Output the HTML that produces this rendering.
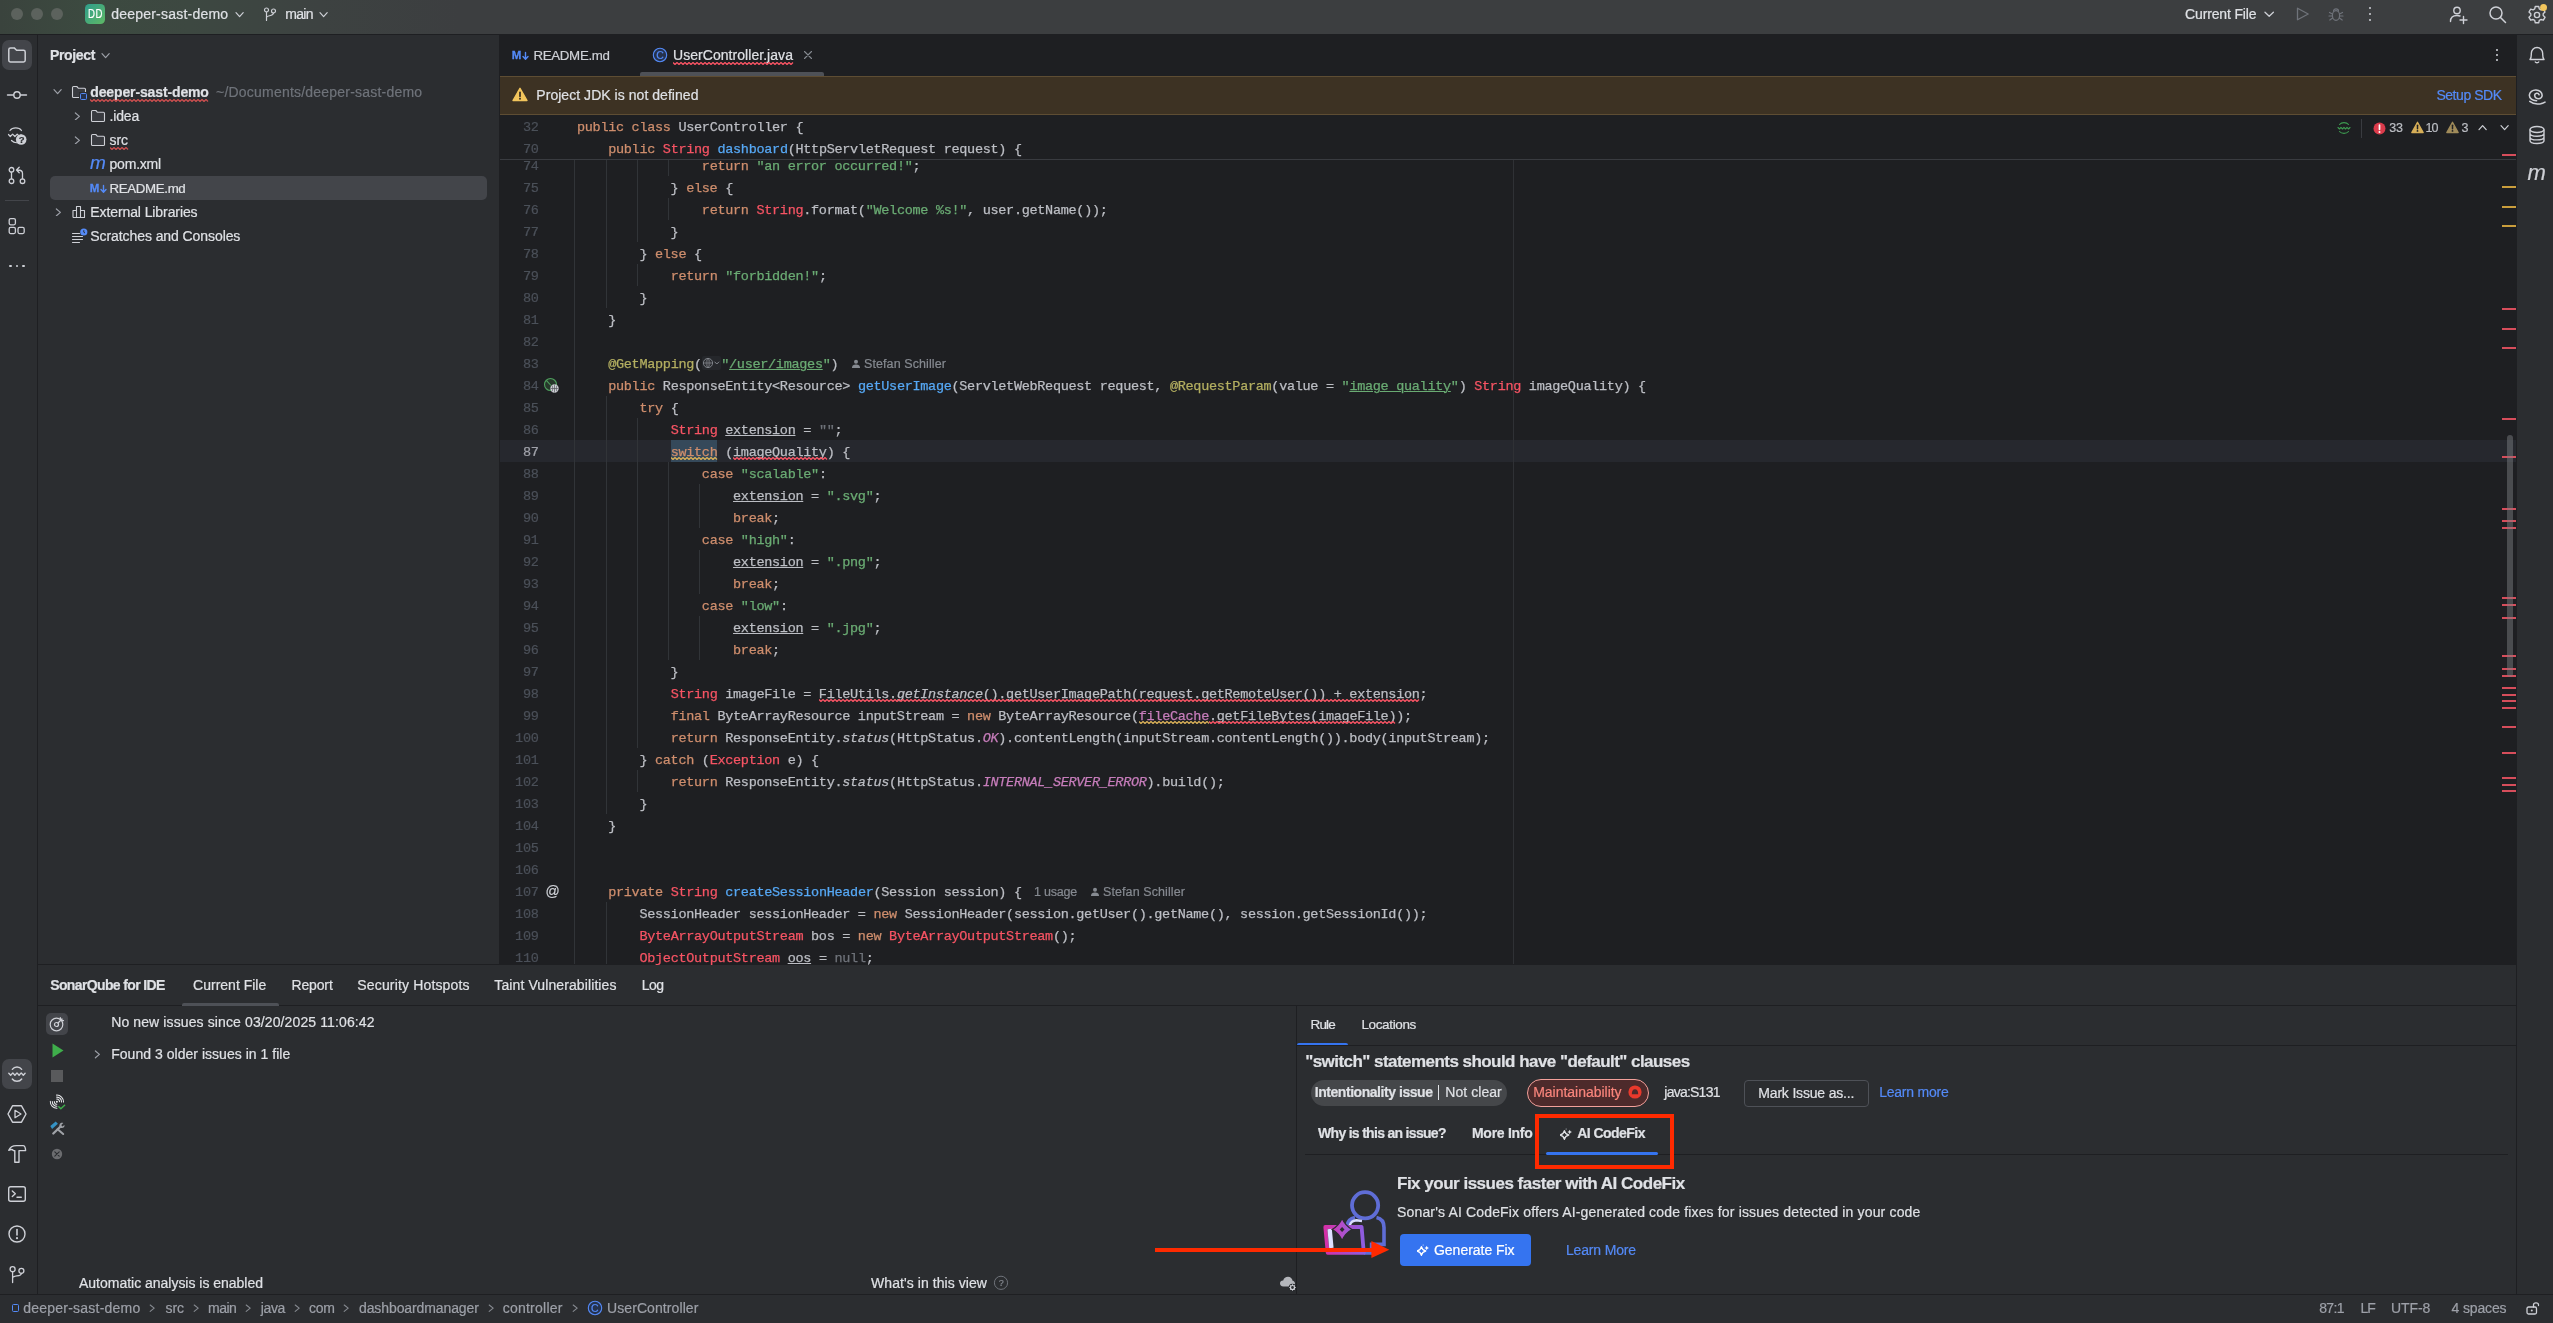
<!DOCTYPE html>
<html><head><meta charset="utf-8"><title>deeper-sast-demo – UserController.java</title>
<style>
html,body{margin:0;padding:0;background:#2b2d30;}
body{width:2553px;height:1323px;position:relative;overflow:hidden;font-family:"Liberation Sans",sans-serif;font-size:14px;color:#dfe1e5;-webkit-text-stroke:0.2px;}
.c{position:absolute;left:577px;height:22px;line-height:25px;font-family:"Liberation Mono",monospace;font-size:13.5px;letter-spacing:-0.3px;-webkit-text-stroke:0.25px;color:#bcbec4;white-space:pre;}
.ln{position:absolute;left:500px;width:38.5px;text-align:right;height:22px;line-height:25px;font-family:"Liberation Mono",monospace;font-size:13.5px;letter-spacing:-0.3px;color:#4b5059;}
.k{color:#cf8e6d}.s{color:#6aab73}.f{color:#56a8f5}.e{color:#f75464}.a{color:#b3ae60}.p{color:#c77dbb}.g{color:#6f737a}
.i{font-style:italic}
.u{text-decoration:underline;text-underline-offset:1px;text-decoration-thickness:1px}
.wr{text-decoration:underline wavy #f75464;text-underline-offset:3px;text-decoration-thickness:1px;text-decoration-skip-ink:none}
.wy{text-decoration:underline wavy #d6ae58;text-underline-offset:3px;text-decoration-thickness:1px;text-decoration-skip-ink:none}
.hint{font-family:"Liberation Sans",sans-serif;font-size:12.5px;color:#868a91}
#root{position:absolute;left:0;top:0;width:2553px;height:1323px;will-change:transform;}
</style></head><body><div id="root">
<div style="position:absolute;left:0px;top:0px;width:2553px;height:34px;background:linear-gradient(90deg,#3a433d 0px,#3c4a40 90px,#3d4841 190px,#3d4241 320px,#3c3e40 460px);"></div>
<div style="position:absolute;left:0px;top:34px;width:2553px;height:1px;background:#1e1f22;"></div>
<div style="position:absolute;left:500px;top:34px;width:2016px;height:930px;background:#1e1f22;"></div>
<div style="position:absolute;left:37px;top:34px;width:1px;height:1261px;background:#1e1f22;"></div>
<div style="position:absolute;left:499px;top:34px;width:1px;height:930px;background:#1e1f22;"></div>
<div style="position:absolute;left:2516px;top:34px;width:1px;height:1261px;background:#1e1f22;"></div>
<div style="position:absolute;left:38px;top:964px;width:2478px;height:1px;background:#1e1f22;"></div>
<div style="position:absolute;left:38px;top:1005px;width:2478px;height:1px;background:#1e1f22;"></div>
<div style="position:absolute;left:1296px;top:1006px;width:1px;height:289px;background:#1e1f22;"></div>
<div style="position:absolute;left:0px;top:1294px;width:2553px;height:1px;background:#1e1f22;"></div>
<div style="position:absolute;left:500px;top:76px;width:2016px;height:39px;background:#3d3223;box-sizing:border-box;border-top:1px solid #5e4d33;border-bottom:1px solid #5e4d33;"></div>
<div style="position:absolute;left:640px;top:72px;width:184px;height:4px;background:#4e5157;border-radius:2px 2px 0 0;"></div>
<div style="position:absolute;left:500px;top:159px;width:2016px;height:1px;background:#393b40;"></div>
<div style="position:absolute;left:500px;top:440px;width:2016px;height:22px;background:#26282e;"></div>
<div style="position:absolute;left:574px;top:160px;width:1px;height:804px;background:#313438;"></div>
<div style="position:absolute;left:1513px;top:160px;width:1px;height:804px;background:#2f3135;"></div>
<div class="ln" style="top:115px">32</div><div class="c" style="top:115px"><span class="k">public class</span> UserController {</div>
<div class="ln" style="top:137px">70</div><div class="c" style="top:137px">    <span class="k">public</span> <span class="e">String</span> <span class="f">dashboard</span>(HttpServletRequest request) {</div>
<div style="position:absolute;left:606px;top:160px;width:1px;height:148px;background:#313438;"></div>
<div style="position:absolute;left:637px;top:160px;width:1px;height:82px;background:#313438;"></div>
<div style="position:absolute;left:637px;top:264px;width:1px;height:22px;background:#313438;"></div>
<div style="position:absolute;left:668px;top:160px;width:1px;height:16px;background:#313438;"></div>
<div style="position:absolute;left:668px;top:198px;width:1px;height:22px;background:#313438;"></div>
<div style="position:absolute;left:606px;top:396px;width:1px;height:418px;background:#313438;"></div>
<div style="position:absolute;left:637px;top:418px;width:1px;height:330px;background:#313438;"></div>
<div style="position:absolute;left:637px;top:770px;width:1px;height:22px;background:#313438;"></div>
<div style="position:absolute;left:668px;top:462px;width:1px;height:198px;background:#313438;"></div>
<div style="position:absolute;left:699px;top:484px;width:1px;height:44px;background:#313438;"></div>
<div style="position:absolute;left:699px;top:550px;width:1px;height:44px;background:#313438;"></div>
<div style="position:absolute;left:699px;top:616px;width:1px;height:44px;background:#313438;"></div>
<div style="position:absolute;left:606px;top:902px;width:1px;height:62px;background:#313438;"></div>
<div style="position:absolute;left:500px;top:160px;width:2016px;height:805px;overflow:hidden">
<div class="ln" style="left:0;top:-6px;color:#4b5059">74</div><div class="c" style="left:77px;top:-6px">                <span class="k">return</span> <span class="s">&quot;an error occurred!&quot;</span>;</div>
<div class="ln" style="left:0;top:16px;color:#4b5059">75</div><div class="c" style="left:77px;top:16px">            } <span class="k">else</span> {</div>
<div class="ln" style="left:0;top:38px;color:#4b5059">76</div><div class="c" style="left:77px;top:38px">                <span class="k">return</span> <span class="e">String</span>.format(<span class="s">&quot;Welcome %s!&quot;</span>, user.getName());</div>
<div class="ln" style="left:0;top:60px;color:#4b5059">77</div><div class="c" style="left:77px;top:60px">            }</div>
<div class="ln" style="left:0;top:82px;color:#4b5059">78</div><div class="c" style="left:77px;top:82px">        } <span class="k">else</span> {</div>
<div class="ln" style="left:0;top:104px;color:#4b5059">79</div><div class="c" style="left:77px;top:104px">            <span class="k">return</span> <span class="s">&quot;forbidden!&quot;</span>;</div>
<div class="ln" style="left:0;top:126px;color:#4b5059">80</div><div class="c" style="left:77px;top:126px">        }</div>
<div class="ln" style="left:0;top:148px;color:#4b5059">81</div><div class="c" style="left:77px;top:148px">    }</div>
<div class="ln" style="left:0;top:170px;color:#4b5059">82</div><div class="c" style="left:77px;top:170px"></div>
<div class="ln" style="left:0;top:192px;color:#4b5059">83</div><div class="c" style="left:77px;top:192px">    <span class="a">@GetMapping</span>(<span style="display:inline-block;width:19.4px"></span><span class="s">&quot;<span class="u">/user/images</span>&quot;</span>)</div>
<div class="ln" style="left:0;top:214px;color:#4b5059">84</div><div class="c" style="left:77px;top:214px">    <span class="k">public</span> ResponseEntity&lt;Resource&gt; <span class="f">getUserImage</span>(ServletWebRequest request, <span class="a">@RequestParam</span>(value = <span class="s">&quot;<span class="u">image_quality</span>&quot;</span>) <span class="e">String</span> imageQuality) {</div>
<div class="ln" style="left:0;top:236px;color:#4b5059">85</div><div class="c" style="left:77px;top:236px">        <span class="k">try</span> {</div>
<div class="ln" style="left:0;top:258px;color:#4b5059">86</div><div class="c" style="left:77px;top:258px">            <span class="e">String</span> <span class="u">extension</span> = <span class="g">&quot;&quot;</span>;</div>
<div class="ln" style="left:0;top:280px;color:#a1a3ab">87</div><div class="c" style="left:77px;top:280px">            <span style="background:#35495a;display:inline-block;height:22px"><span class="k">switch</span></span> (imageQuality) {</div>
<div class="ln" style="left:0;top:302px;color:#4b5059">88</div><div class="c" style="left:77px;top:302px">                <span class="k">case</span> <span class="s">&quot;scalable&quot;</span>:</div>
<div class="ln" style="left:0;top:324px;color:#4b5059">89</div><div class="c" style="left:77px;top:324px">                    <span class="u">extension</span> = <span class="s">&quot;.svg&quot;</span>;</div>
<div class="ln" style="left:0;top:346px;color:#4b5059">90</div><div class="c" style="left:77px;top:346px">                    <span class="k">break</span>;</div>
<div class="ln" style="left:0;top:368px;color:#4b5059">91</div><div class="c" style="left:77px;top:368px">                <span class="k">case</span> <span class="s">&quot;high&quot;</span>:</div>
<div class="ln" style="left:0;top:390px;color:#4b5059">92</div><div class="c" style="left:77px;top:390px">                    <span class="u">extension</span> = <span class="s">&quot;.png&quot;</span>;</div>
<div class="ln" style="left:0;top:412px;color:#4b5059">93</div><div class="c" style="left:77px;top:412px">                    <span class="k">break</span>;</div>
<div class="ln" style="left:0;top:434px;color:#4b5059">94</div><div class="c" style="left:77px;top:434px">                <span class="k">case</span> <span class="s">&quot;low&quot;</span>:</div>
<div class="ln" style="left:0;top:456px;color:#4b5059">95</div><div class="c" style="left:77px;top:456px">                    <span class="u">extension</span> = <span class="s">&quot;.jpg&quot;</span>;</div>
<div class="ln" style="left:0;top:478px;color:#4b5059">96</div><div class="c" style="left:77px;top:478px">                    <span class="k">break</span>;</div>
<div class="ln" style="left:0;top:500px;color:#4b5059">97</div><div class="c" style="left:77px;top:500px">            }</div>
<div class="ln" style="left:0;top:522px;color:#4b5059">98</div><div class="c" style="left:77px;top:522px">            <span class="e">String</span> imageFile = FileUtils.<span class="i">getInstance</span>().getUserImagePath(request.getRemoteUser()) + extension;</div>
<div class="ln" style="left:0;top:544px;color:#4b5059">99</div><div class="c" style="left:77px;top:544px">            <span class="k">final</span> ByteArrayResource inputStream = <span class="k">new</span> ByteArrayResource(<span class="p">fileCache</span>.getFileBytes(imageFile));</div>
<div class="ln" style="left:0;top:566px;color:#4b5059">100</div><div class="c" style="left:77px;top:566px">            <span class="k">return</span> ResponseEntity.<span class="i">status</span>(HttpStatus.<span class="p"><span class="i">OK</span></span>).contentLength(inputStream.contentLength()).body(inputStream);</div>
<div class="ln" style="left:0;top:588px;color:#4b5059">101</div><div class="c" style="left:77px;top:588px">        } <span class="k">catch</span> (<span class="e">Exception</span> e) {</div>
<div class="ln" style="left:0;top:610px;color:#4b5059">102</div><div class="c" style="left:77px;top:610px">            <span class="k">return</span> ResponseEntity.<span class="i">status</span>(HttpStatus.<span class="p"><span class="i">INTERNAL_SERVER_ERROR</span></span>).build();</div>
<div class="ln" style="left:0;top:632px;color:#4b5059">103</div><div class="c" style="left:77px;top:632px">        }</div>
<div class="ln" style="left:0;top:654px;color:#4b5059">104</div><div class="c" style="left:77px;top:654px">    }</div>
<div class="ln" style="left:0;top:676px;color:#4b5059">105</div><div class="c" style="left:77px;top:676px"></div>
<div class="ln" style="left:0;top:698px;color:#4b5059">106</div><div class="c" style="left:77px;top:698px"></div>
<div class="ln" style="left:0;top:720px;color:#4b5059">107</div><div class="c" style="left:77px;top:720px">    <span class="k">private</span> <span class="e">String</span> <span class="f">createSessionHeader</span>(Session session) {</div>
<div class="ln" style="left:0;top:742px;color:#4b5059">108</div><div class="c" style="left:77px;top:742px">        SessionHeader sessionHeader = <span class="k">new</span> SessionHeader(session.getUser().getName(), session.getSessionId());</div>
<div class="ln" style="left:0;top:764px;color:#4b5059">109</div><div class="c" style="left:77px;top:764px">        <span class="e">ByteArrayOutputStream</span> bos = <span class="k">new</span> <span class="e">ByteArrayOutputStream</span>();</div>
<div class="ln" style="left:0;top:786px;color:#4b5059">110</div><div class="c" style="left:77px;top:786px">        <span class="e">ObjectOutputStream</span> <span class="u">oos</span> = <span class="g">null</span>;</div>
</div>
<span style="position:absolute;left:864.0px;top:354.0px;line-height:20px;font-size:12.5px;color:#868a91;white-space:pre;letter-spacing:0.093px;">Stefan Schiller</span>
<span style="position:absolute;left:1034.0px;top:882.0px;line-height:20px;font-size:12.5px;color:#868a91;white-space:pre;letter-spacing:-0.212px;">1 usage</span>
<span style="position:absolute;left:1103.0px;top:882.0px;line-height:20px;font-size:12.5px;color:#868a91;white-space:pre;letter-spacing:0.093px;">Stefan Schiller</span>
<svg style="position:absolute;left:671px;top:457.0px;" width="47" height="3" viewBox="0 0 47 3" fill="none"><path d="M0 0.5 L2 2.5 L4 0.5 L6 2.5 L8 0.5 L10 2.5 L12 0.5 L14 2.5 L16 0.5 L18 2.5 L20 0.5 L22 2.5 L24 0.5 L26 2.5 L28 0.5 L30 2.5 L32 0.5 L34 2.5 L36 0.5 L38 2.5 L40 0.5 L42 2.5 L44 0.5 L46 2.5" stroke="#d6ae58" stroke-width="1.25" stroke-linejoin="round"/></svg>
<svg style="position:absolute;left:733px;top:457.0px;" width="95" height="3" viewBox="0 0 95 3" fill="none"><path d="M0 0.5 L2 2.5 L4 0.5 L6 2.5 L8 0.5 L10 2.5 L12 0.5 L14 2.5 L16 0.5 L18 2.5 L20 0.5 L22 2.5 L24 0.5 L26 2.5 L28 0.5 L30 2.5 L32 0.5 L34 2.5 L36 0.5 L38 2.5 L40 0.5 L42 2.5 L44 0.5 L46 2.5 L48 0.5 L50 2.5 L52 0.5 L54 2.5 L56 0.5 L58 2.5 L60 0.5 L62 2.5 L64 0.5 L66 2.5 L68 0.5 L70 2.5 L72 0.5 L74 2.5 L76 0.5 L78 2.5 L80 0.5 L82 2.5 L84 0.5 L86 2.5 L88 0.5 L90 2.5 L92 0.5 L94 2.5" stroke="#f75464" stroke-width="1.25" stroke-linejoin="round"/></svg>
<svg style="position:absolute;left:819px;top:699.0px;" width="601" height="3" viewBox="0 0 601 3" fill="none"><path d="M0 0.5 L2 2.5 L4 0.5 L6 2.5 L8 0.5 L10 2.5 L12 0.5 L14 2.5 L16 0.5 L18 2.5 L20 0.5 L22 2.5 L24 0.5 L26 2.5 L28 0.5 L30 2.5 L32 0.5 L34 2.5 L36 0.5 L38 2.5 L40 0.5 L42 2.5 L44 0.5 L46 2.5 L48 0.5 L50 2.5 L52 0.5 L54 2.5 L56 0.5 L58 2.5 L60 0.5 L62 2.5 L64 0.5 L66 2.5 L68 0.5 L70 2.5 L72 0.5 L74 2.5 L76 0.5 L78 2.5 L80 0.5 L82 2.5 L84 0.5 L86 2.5 L88 0.5 L90 2.5 L92 0.5 L94 2.5 L96 0.5 L98 2.5 L100 0.5 L102 2.5 L104 0.5 L106 2.5 L108 0.5 L110 2.5 L112 0.5 L114 2.5 L116 0.5 L118 2.5 L120 0.5 L122 2.5 L124 0.5 L126 2.5 L128 0.5 L130 2.5 L132 0.5 L134 2.5 L136 0.5 L138 2.5 L140 0.5 L142 2.5 L144 0.5 L146 2.5 L148 0.5 L150 2.5 L152 0.5 L154 2.5 L156 0.5 L158 2.5 L160 0.5 L162 2.5 L164 0.5 L166 2.5 L168 0.5 L170 2.5 L172 0.5 L174 2.5 L176 0.5 L178 2.5 L180 0.5 L182 2.5 L184 0.5 L186 2.5 L188 0.5 L190 2.5 L192 0.5 L194 2.5 L196 0.5 L198 2.5 L200 0.5 L202 2.5 L204 0.5 L206 2.5 L208 0.5 L210 2.5 L212 0.5 L214 2.5 L216 0.5 L218 2.5 L220 0.5 L222 2.5 L224 0.5 L226 2.5 L228 0.5 L230 2.5 L232 0.5 L234 2.5 L236 0.5 L238 2.5 L240 0.5 L242 2.5 L244 0.5 L246 2.5 L248 0.5 L250 2.5 L252 0.5 L254 2.5 L256 0.5 L258 2.5 L260 0.5 L262 2.5 L264 0.5 L266 2.5 L268 0.5 L270 2.5 L272 0.5 L274 2.5 L276 0.5 L278 2.5 L280 0.5 L282 2.5 L284 0.5 L286 2.5 L288 0.5 L290 2.5 L292 0.5 L294 2.5 L296 0.5 L298 2.5 L300 0.5 L302 2.5 L304 0.5 L306 2.5 L308 0.5 L310 2.5 L312 0.5 L314 2.5 L316 0.5 L318 2.5 L320 0.5 L322 2.5 L324 0.5 L326 2.5 L328 0.5 L330 2.5 L332 0.5 L334 2.5 L336 0.5 L338 2.5 L340 0.5 L342 2.5 L344 0.5 L346 2.5 L348 0.5 L350 2.5 L352 0.5 L354 2.5 L356 0.5 L358 2.5 L360 0.5 L362 2.5 L364 0.5 L366 2.5 L368 0.5 L370 2.5 L372 0.5 L374 2.5 L376 0.5 L378 2.5 L380 0.5 L382 2.5 L384 0.5 L386 2.5 L388 0.5 L390 2.5 L392 0.5 L394 2.5 L396 0.5 L398 2.5 L400 0.5 L402 2.5 L404 0.5 L406 2.5 L408 0.5 L410 2.5 L412 0.5 L414 2.5 L416 0.5 L418 2.5 L420 0.5 L422 2.5 L424 0.5 L426 2.5 L428 0.5 L430 2.5 L432 0.5 L434 2.5 L436 0.5 L438 2.5 L440 0.5 L442 2.5 L444 0.5 L446 2.5 L448 0.5 L450 2.5 L452 0.5 L454 2.5 L456 0.5 L458 2.5 L460 0.5 L462 2.5 L464 0.5 L466 2.5 L468 0.5 L470 2.5 L472 0.5 L474 2.5 L476 0.5 L478 2.5 L480 0.5 L482 2.5 L484 0.5 L486 2.5 L488 0.5 L490 2.5 L492 0.5 L494 2.5 L496 0.5 L498 2.5 L500 0.5 L502 2.5 L504 0.5 L506 2.5 L508 0.5 L510 2.5 L512 0.5 L514 2.5 L516 0.5 L518 2.5 L520 0.5 L522 2.5 L524 0.5 L526 2.5 L528 0.5 L530 2.5 L532 0.5 L534 2.5 L536 0.5 L538 2.5 L540 0.5 L542 2.5 L544 0.5 L546 2.5 L548 0.5 L550 2.5 L552 0.5 L554 2.5 L556 0.5 L558 2.5 L560 0.5 L562 2.5 L564 0.5 L566 2.5 L568 0.5 L570 2.5 L572 0.5 L574 2.5 L576 0.5 L578 2.5 L580 0.5 L582 2.5 L584 0.5 L586 2.5 L588 0.5 L590 2.5 L592 0.5 L594 2.5 L596 0.5 L598 2.5 L600 0.5" stroke="#f75464" stroke-width="1.25" stroke-linejoin="round"/></svg>
<svg style="position:absolute;left:1139px;top:721.0px;" width="71" height="3" viewBox="0 0 71 3" fill="none"><path d="M0 0.5 L2 2.5 L4 0.5 L6 2.5 L8 0.5 L10 2.5 L12 0.5 L14 2.5 L16 0.5 L18 2.5 L20 0.5 L22 2.5 L24 0.5 L26 2.5 L28 0.5 L30 2.5 L32 0.5 L34 2.5 L36 0.5 L38 2.5 L40 0.5 L42 2.5 L44 0.5 L46 2.5 L48 0.5 L50 2.5 L52 0.5 L54 2.5 L56 0.5 L58 2.5 L60 0.5 L62 2.5 L64 0.5 L66 2.5 L68 0.5 L70 2.5" stroke="#d6ae58" stroke-width="1.25" stroke-linejoin="round"/></svg>
<svg style="position:absolute;left:1209px;top:721.0px;" width="188" height="3" viewBox="0 0 188 3" fill="none"><path d="M0 0.5 L2 2.5 L4 0.5 L6 2.5 L8 0.5 L10 2.5 L12 0.5 L14 2.5 L16 0.5 L18 2.5 L20 0.5 L22 2.5 L24 0.5 L26 2.5 L28 0.5 L30 2.5 L32 0.5 L34 2.5 L36 0.5 L38 2.5 L40 0.5 L42 2.5 L44 0.5 L46 2.5 L48 0.5 L50 2.5 L52 0.5 L54 2.5 L56 0.5 L58 2.5 L60 0.5 L62 2.5 L64 0.5 L66 2.5 L68 0.5 L70 2.5 L72 0.5 L74 2.5 L76 0.5 L78 2.5 L80 0.5 L82 2.5 L84 0.5 L86 2.5 L88 0.5 L90 2.5 L92 0.5 L94 2.5 L96 0.5 L98 2.5 L100 0.5 L102 2.5 L104 0.5 L106 2.5 L108 0.5 L110 2.5 L112 0.5 L114 2.5 L116 0.5 L118 2.5 L120 0.5 L122 2.5 L124 0.5 L126 2.5 L128 0.5 L130 2.5 L132 0.5 L134 2.5 L136 0.5 L138 2.5 L140 0.5 L142 2.5 L144 0.5 L146 2.5 L148 0.5 L150 2.5 L152 0.5 L154 2.5 L156 0.5 L158 2.5 L160 0.5 L162 2.5 L164 0.5 L166 2.5 L168 0.5 L170 2.5 L172 0.5 L174 2.5 L176 0.5 L178 2.5 L180 0.5 L182 2.5 L184 0.5 L186 2.5" stroke="#f75464" stroke-width="1.25" stroke-linejoin="round"/></svg>
<span style="position:absolute;left:111.2px;top:4.2px;line-height:20px;font-size:14px;color:#dfe1e5;white-space:pre;letter-spacing:0.217px;">deeper-sast-demo</span>
<span style="position:absolute;left:285.2px;top:4.2px;line-height:20px;font-size:14px;color:#dfe1e5;white-space:pre;letter-spacing:-0.640px;">main</span>
<span style="position:absolute;left:2185.1px;top:4.2px;line-height:20px;font-size:14px;color:#dfe1e5;white-space:pre;letter-spacing:-0.153px;">Current File</span>
<div style="position:absolute;left:85px;top:4px;width:20px;height:20px;background:linear-gradient(135deg,#2f9e8c,#5fb865);border-radius:4.5px;"></div>
<span style="position:absolute;left:87.9px;top:4.4px;line-height:20px;font-size:13px;color:#fff;white-space:pre;display:inline-block;transform:scaleX(0.74);transform-origin:0 50%;letter-spacing:0.6px;">DD</span>
<div style="position:absolute;left:11px;top:8px;width:12px;height:12px;background:#5c625d;border-radius:50%;"></div>
<div style="position:absolute;left:31px;top:8px;width:12px;height:12px;background:#5c625d;border-radius:50%;"></div>
<div style="position:absolute;left:51px;top:8px;width:12px;height:12px;background:#5c625d;border-radius:50%;"></div>
<span style="position:absolute;left:50.0px;top:45.0px;line-height:20px;font-size:14px;color:#dfe1e5;white-space:pre;font-weight:700;letter-spacing:-0.353px;">Project</span>
<span style="position:absolute;left:90.3px;top:82.3px;line-height:20px;font-size:14px;color:#dfe1e5;white-space:pre;font-weight:700;letter-spacing:-0.131px;">deeper-sast-demo</span>
<span style="position:absolute;left:216.0px;top:82.3px;line-height:20px;font-size:14px;color:#6f737a;white-space:pre;letter-spacing:0.212px;">~/Documents/deeper-sast-demo</span>
<span style="position:absolute;left:109.5px;top:106.0px;line-height:20px;font-size:14px;color:#dfe1e5;white-space:pre;letter-spacing:-0.172px;">.idea</span>
<span style="position:absolute;left:109.5px;top:130.0px;line-height:20px;font-size:14px;color:#dfe1e5;white-space:pre;letter-spacing:-0.057px;">src</span>
<span style="position:absolute;left:109.5px;top:154.0px;line-height:20px;font-size:14px;color:#dfe1e5;white-space:pre;letter-spacing:-0.201px;">pom.xml</span>
<div style="position:absolute;left:50px;top:176px;width:437px;height:24px;background:#43454a;border-radius:5px;"></div>
<span style="position:absolute;left:109.5px;top:178.7px;line-height:20px;font-size:13.3px;color:#dfe1e5;white-space:pre;letter-spacing:-0.351px;">README.md</span>
<span style="position:absolute;left:90.3px;top:202.0px;line-height:20px;font-size:14px;color:#dfe1e5;white-space:pre;letter-spacing:-0.097px;">External Libraries</span>
<span style="position:absolute;left:90.3px;top:226.0px;line-height:20px;font-size:14px;color:#dfe1e5;white-space:pre;letter-spacing:-0.080px;">Scratches and Consoles</span>
<span style="position:absolute;left:533.4px;top:45.9px;line-height:20px;font-size:13.3px;color:#ced0d6;white-space:pre;letter-spacing:-0.307px;">README.md</span>
<span style="position:absolute;left:673.0px;top:45.0px;line-height:20px;font-size:14px;color:#dfe1e5;white-space:pre;letter-spacing:0.049px;">UserController.java</span>
<span style="position:absolute;left:536.3px;top:85.0px;line-height:20px;font-size:14px;color:#dfe1e5;white-space:pre;letter-spacing:0.043px;">Project JDK is not defined</span>
<span style="position:absolute;left:2436.4px;top:85.2px;line-height:20px;font-size:14px;color:#548af7;white-space:pre;letter-spacing:-0.452px;">Setup SDK</span>
<span style="position:absolute;left:2389.3px;top:118.0px;line-height:20px;font-size:12.5px;color:#bcbec4;white-space:pre;letter-spacing:-0.303px;">33</span>
<span style="position:absolute;left:2425.6px;top:118.0px;line-height:20px;font-size:12.5px;color:#bcbec4;white-space:pre;letter-spacing:-0.953px;">10</span>
<span style="position:absolute;left:2461.4px;top:118.0px;line-height:20px;font-size:12.5px;color:#bcbec4;white-space:pre;">3</span>
<span style="position:absolute;left:50.2px;top:975.3px;line-height:20px;font-size:14px;color:#dfe1e5;white-space:pre;font-weight:700;letter-spacing:-0.631px;">SonarQube for IDE</span>
<span style="position:absolute;left:193.1px;top:975.3px;line-height:20px;font-size:14px;color:#dfe1e5;white-space:pre;">Current File</span>
<span style="position:absolute;left:291.4px;top:975.3px;line-height:20px;font-size:14px;color:#dfe1e5;white-space:pre;letter-spacing:-0.122px;">Report</span>
<span style="position:absolute;left:357.3px;top:975.3px;line-height:20px;font-size:14px;color:#dfe1e5;white-space:pre;letter-spacing:0.158px;">Security Hotspots</span>
<span style="position:absolute;left:494.3px;top:975.3px;line-height:20px;font-size:14px;color:#dfe1e5;white-space:pre;letter-spacing:0.104px;">Taint Vulnerabilities</span>
<span style="position:absolute;left:641.7px;top:975.3px;line-height:20px;font-size:14px;color:#dfe1e5;white-space:pre;letter-spacing:-0.486px;">Log</span>
<div style="position:absolute;left:181.5px;top:1003px;width:97.5px;height:3px;background:#4e5157;border-radius:2px 2px 0 0;"></div>
<span style="position:absolute;left:111.2px;top:1012.4px;line-height:20px;font-size:14px;color:#dfe1e5;white-space:pre;letter-spacing:0.115px;">No new issues since 03/20/2025 11:06:42</span>
<span style="position:absolute;left:111.2px;top:1044.2px;line-height:20px;font-size:14px;color:#dfe1e5;white-space:pre;letter-spacing:0.029px;">Found 3 older issues in 1 file</span>
<span style="position:absolute;left:79.0px;top:1273.0px;line-height:20px;font-size:14px;color:#dfe1e5;white-space:pre;letter-spacing:-0.015px;">Automatic analysis is enabled</span>
<span style="position:absolute;left:871.0px;top:1272.5px;line-height:20px;font-size:14px;color:#dfe1e5;white-space:pre;letter-spacing:0.067px;">What&#x27;s in this view</span>
<span style="position:absolute;left:1310.5px;top:1014.8px;line-height:20px;font-size:13.5px;color:#dfe1e5;white-space:pre;letter-spacing:-0.866px;">Rule</span>
<span style="position:absolute;left:1361.4px;top:1014.8px;line-height:20px;font-size:13.5px;color:#dfe1e5;white-space:pre;letter-spacing:-0.355px;">Locations</span>
<div style="position:absolute;left:1297px;top:1043px;width:51px;height:3px;background:#3574f0;border-radius:2px 2px 0 0;"></div>
<div style="position:absolute;left:1297px;top:1045px;width:1219px;height:1px;background:#1e1f22;"></div>
<span style="position:absolute;left:1305.2px;top:1050.2px;line-height:24px;font-size:17px;color:#dfe1e5;white-space:pre;font-weight:700;letter-spacing:-0.545px;">&quot;switch&quot; statements should have &quot;default&quot; clauses</span>
<div style="position:absolute;left:1310.5px;top:1079.5px;width:196px;height:26px;background:#45474a;border-radius:13px;"></div>
<span style="position:absolute;left:1314.8px;top:1082.4px;line-height:20px;font-size:14px;color:#dfe1e5;white-space:pre;font-weight:700;letter-spacing:-0.456px;">Intentionality issue</span>
<div style="position:absolute;left:1438.2px;top:1085px;width:1.2px;height:15px;background:#dfe1e5;"></div>
<span style="position:absolute;left:1445.3px;top:1082.4px;line-height:20px;font-size:14px;color:#dfe1e5;white-space:pre;letter-spacing:0.052px;">Not clear</span>
<div style="position:absolute;left:1527px;top:1078.5px;width:122px;height:28px;background:#4d2a2b;border-radius:14px;box-sizing:border-box;border:1.2px solid #f3a19b;"></div>
<span style="position:absolute;left:1533.2px;top:1082.4px;line-height:20px;font-size:14px;color:#f9857c;white-space:pre;letter-spacing:-0.021px;">Maintainability</span>
<span style="position:absolute;left:1664.3px;top:1082.4px;line-height:20px;font-size:14px;color:#dfe1e5;white-space:pre;letter-spacing:-0.765px;">java:S131</span>
<div style="position:absolute;left:1744px;top:1079.5px;width:125px;height:27.5px;background:transparent;border-radius:4px;box-sizing:border-box;border:1px solid #4e5157;"></div>
<span style="position:absolute;left:1758.3px;top:1083.0px;line-height:20px;font-size:14px;color:#dfe1e5;white-space:pre;letter-spacing:-0.182px;">Mark Issue as...</span>
<span style="position:absolute;left:1879.2px;top:1082.4px;line-height:20px;font-size:14px;color:#548af7;white-space:pre;letter-spacing:-0.229px;">Learn more</span>
<span style="position:absolute;left:1318.0px;top:1123.2px;line-height:20px;font-size:14px;color:#dfe1e5;white-space:pre;font-weight:700;letter-spacing:-0.694px;">Why is this an issue?</span>
<span style="position:absolute;left:1472.0px;top:1123.2px;line-height:20px;font-size:14px;color:#dfe1e5;white-space:pre;font-weight:700;letter-spacing:-0.289px;">More Info</span>
<span style="position:absolute;left:1577.2px;top:1123.2px;line-height:20px;font-size:14px;color:#dfe1e5;white-space:pre;font-weight:700;letter-spacing:-0.533px;">AI CodeFix</span>
<div style="position:absolute;left:1305px;top:1154px;width:1203px;height:1px;background:#1e1f22;"></div>
<div style="position:absolute;left:1546px;top:1152px;width:112px;height:3px;background:#3574f0;border-radius:1.5px;"></div>
<span style="position:absolute;left:1397.0px;top:1171.6px;line-height:24px;font-size:17px;color:#dfe1e5;white-space:pre;font-weight:700;letter-spacing:-0.492px;">Fix your issues faster with AI CodeFix</span>
<span style="position:absolute;left:1397.0px;top:1201.5px;line-height:20px;font-size:14px;color:#dfe1e5;white-space:pre;letter-spacing:0.157px;">Sonar&#x27;s AI CodeFix offers AI-generated code fixes for issues detected in your code</span>
<div style="position:absolute;left:1400px;top:1234px;width:131px;height:32px;background:#3574f0;border-radius:4px;"></div>
<span style="position:absolute;left:1434.0px;top:1240.0px;line-height:20px;font-size:14px;color:#fff;white-space:pre;letter-spacing:-0.028px;">Generate Fix</span>
<span style="position:absolute;left:1566.0px;top:1239.5px;line-height:20px;font-size:14px;color:#548af7;white-space:pre;letter-spacing:-0.169px;">Learn More</span>
<span style="position:absolute;left:23.3px;top:1298.0px;line-height:20px;font-size:14px;color:#9da0a8;white-space:pre;letter-spacing:0.223px;">deeper-sast-demo</span>
<span style="position:absolute;left:165.5px;top:1298.0px;line-height:20px;font-size:14px;color:#9da0a8;white-space:pre;letter-spacing:-0.124px;">src</span>
<span style="position:absolute;left:208.0px;top:1298.0px;line-height:20px;font-size:14px;color:#9da0a8;white-space:pre;letter-spacing:-0.490px;">main</span>
<span style="position:absolute;left:260.7px;top:1298.0px;line-height:20px;font-size:14px;color:#9da0a8;white-space:pre;letter-spacing:-0.347px;">java</span>
<span style="position:absolute;left:309.0px;top:1298.0px;line-height:20px;font-size:14px;color:#9da0a8;white-space:pre;letter-spacing:-0.284px;">com</span>
<span style="position:absolute;left:359.0px;top:1298.0px;line-height:20px;font-size:14px;color:#9da0a8;white-space:pre;letter-spacing:-0.101px;">dashboardmanager</span>
<span style="position:absolute;left:502.7px;top:1298.0px;line-height:20px;font-size:14px;color:#9da0a8;white-space:pre;letter-spacing:0.241px;">controller</span>
<span style="position:absolute;left:607.0px;top:1298.0px;line-height:20px;font-size:14px;color:#9da0a8;white-space:pre;letter-spacing:0.089px;">UserController</span>
<span style="position:absolute;left:2319.2px;top:1297.9px;line-height:20px;font-size:14px;color:#9da0a8;white-space:pre;letter-spacing:-0.637px;">87:1</span>
<span style="position:absolute;left:2360.4px;top:1297.9px;line-height:20px;font-size:14px;color:#9da0a8;white-space:pre;letter-spacing:-1.022px;">LF</span>
<span style="position:absolute;left:2391.1px;top:1297.9px;line-height:20px;font-size:14px;color:#9da0a8;white-space:pre;letter-spacing:-0.134px;">UTF-8</span>
<span style="position:absolute;left:2451.5px;top:1297.9px;line-height:20px;font-size:14px;color:#9da0a8;white-space:pre;letter-spacing:-0.143px;">4 spaces</span>
<svg style="position:absolute;left:90px;top:99.0px;" width="120" height="3" viewBox="0 0 120 3" fill="none"><path d="M0 0.5 L2 2.5 L4 0.5 L6 2.5 L8 0.5 L10 2.5 L12 0.5 L14 2.5 L16 0.5 L18 2.5 L20 0.5 L22 2.5 L24 0.5 L26 2.5 L28 0.5 L30 2.5 L32 0.5 L34 2.5 L36 0.5 L38 2.5 L40 0.5 L42 2.5 L44 0.5 L46 2.5 L48 0.5 L50 2.5 L52 0.5 L54 2.5 L56 0.5 L58 2.5 L60 0.5 L62 2.5 L64 0.5 L66 2.5 L68 0.5 L70 2.5 L72 0.5 L74 2.5 L76 0.5 L78 2.5 L80 0.5 L82 2.5 L84 0.5 L86 2.5 L88 0.5 L90 2.5 L92 0.5 L94 2.5 L96 0.5 L98 2.5 L100 0.5 L102 2.5 L104 0.5 L106 2.5 L108 0.5 L110 2.5 L112 0.5 L114 2.5 L116 0.5 L118 2.5" stroke="#c94f4f" stroke-width="1.25" stroke-linejoin="round"/></svg>
<svg style="position:absolute;left:110px;top:147.0px;" width="19" height="3" viewBox="0 0 19 3" fill="none"><path d="M0 0.5 L2 2.5 L4 0.5 L6 2.5 L8 0.5 L10 2.5 L12 0.5 L14 2.5 L16 0.5 L18 2.5" stroke="#c94f4f" stroke-width="1.25" stroke-linejoin="round"/></svg>
<svg style="position:absolute;left:673px;top:62.0px;" width="121" height="3" viewBox="0 0 121 3" fill="none"><path d="M0 0.5 L2 2.5 L4 0.5 L6 2.5 L8 0.5 L10 2.5 L12 0.5 L14 2.5 L16 0.5 L18 2.5 L20 0.5 L22 2.5 L24 0.5 L26 2.5 L28 0.5 L30 2.5 L32 0.5 L34 2.5 L36 0.5 L38 2.5 L40 0.5 L42 2.5 L44 0.5 L46 2.5 L48 0.5 L50 2.5 L52 0.5 L54 2.5 L56 0.5 L58 2.5 L60 0.5 L62 2.5 L64 0.5 L66 2.5 L68 0.5 L70 2.5 L72 0.5 L74 2.5 L76 0.5 L78 2.5 L80 0.5 L82 2.5 L84 0.5 L86 2.5 L88 0.5 L90 2.5 L92 0.5 L94 2.5 L96 0.5 L98 2.5 L100 0.5 L102 2.5 L104 0.5 L106 2.5 L108 0.5 L110 2.5 L112 0.5 L114 2.5 L116 0.5 L118 2.5 L120 0.5" stroke="#f75464" stroke-width="1.25" stroke-linejoin="round"/></svg>
<svg style="position:absolute;left:234.9px;top:10.9px;" width="9.2" height="7.2" viewBox="0 0 9.2 7.2" fill="none"><path d="M1 1.6 L4.6 5.6 L8.2 1.6" stroke="#ced0d6" stroke-width="1.2" stroke-linecap="round" stroke-linejoin="round"/></svg>
<svg style="position:absolute;left:319.4px;top:10.9px;" width="9.2" height="7.2" viewBox="0 0 9.2 7.2" fill="none"><path d="M1 1.6 L4.6 5.6 L8.2 1.6" stroke="#ced0d6" stroke-width="1.2" stroke-linecap="round" stroke-linejoin="round"/></svg>
<svg style="position:absolute;left:2263.8px;top:10.3px;" width="10.4" height="8.4" viewBox="0 0 10.4 8.4" fill="none"><path d="M1 2.2 L5.2 6.2 L9.4 2.2" stroke="#ced0d6" stroke-width="1.3" stroke-linecap="round" stroke-linejoin="round"/></svg>
<svg style="position:absolute;left:262px;top:6px;" width="16" height="16" viewBox="0 0 16 16" fill="none"><circle cx="4.5" cy="4" r="2" stroke="#ced0d6" stroke-width="1.2"/><circle cx="11.5" cy="5" r="2" stroke="#ced0d6" stroke-width="1.2"/><path d="M4.5 6 V14.5 M4.5 11.5 C4.5 9 11.5 10.5 11.5 7" stroke="#ced0d6" stroke-width="1.2" stroke-linecap="round"/></svg>
<svg style="position:absolute;left:2295px;top:6px;" width="16" height="16" viewBox="0 0 16 16" fill="none"><path d="M2.5 2.2 L13.2 8 L2.5 13.8 Z" stroke="#6f737a" stroke-width="1.3" stroke-linejoin="round"/></svg>
<svg style="position:absolute;left:2327px;top:5px;" width="18" height="18" viewBox="0 0 18 18" fill="none"><ellipse cx="9" cy="10.5" rx="3.6" ry="4.8" stroke="#6f737a" stroke-width="1.2"/><path d="M6.5 6.2 C6.5 3.2 11.5 3.2 11.5 6.2 M5.4 9 L2.5 7.5 M5.4 11 H2 M5.6 13 L2.8 15 M12.6 9 L15.5 7.5 M12.6 11 H16 M12.4 13 L15.2 15" stroke="#6f737a" stroke-width="1.2" stroke-linecap="round"/></svg>
<div style="position:absolute;left:2369px;top:7.200000000000001px;width:2.2px;height:2.2px;background:#ced0d6;border-radius:50%;"></div>
<div style="position:absolute;left:2369px;top:13.1px;width:2.2px;height:2.2px;background:#ced0d6;border-radius:50%;"></div>
<div style="position:absolute;left:2369px;top:18.9px;width:2.2px;height:2.2px;background:#ced0d6;border-radius:50%;"></div>
<svg style="position:absolute;left:2448px;top:4px;" width="22" height="22" viewBox="0 0 22 22" fill="none"><circle cx="9" cy="6.5" r="3.2" stroke="#ced0d6" stroke-width="1.4"/><path d="M2.5 17.5 C2.5 13 5.5 11.5 9 11.5 C10.2 11.5 11.2 11.7 12 12 M15.5 12.5 V19.5 M12 16 H19" stroke="#ced0d6" stroke-width="1.4" stroke-linecap="round"/></svg>
<svg style="position:absolute;left:2487px;top:4px;" width="22" height="22" viewBox="0 0 22 22" fill="none"><circle cx="9" cy="9" r="6" stroke="#ced0d6" stroke-width="1.5"/><path d="M13.5 13.5 L18.5 18.5" stroke="#ced0d6" stroke-width="1.5" stroke-linecap="round"/></svg>
<svg style="position:absolute;left:2527px;top:5px;" width="20" height="20" viewBox="0 0 20 20" fill="none"><path d="M8.3 1.5 h3.4 l.6 2.4 l1.6 .9 l2.4 -.7 l1.7 2.9 l-1.8 1.7 v1.9 l1.8 1.7 l-1.7 2.9 l-2.4 -.7 l-1.6 .9 l-.6 2.4 h-3.4 l-.6 -2.4 l-1.6 -.9 l-2.4 .7 l-1.7 -2.9 l1.8 -1.7 v-1.9 l-1.8 -1.7 l1.7 -2.9 l2.4 .7 l1.6 -.9 z" stroke="#ced0d6" stroke-width="1.4" stroke-linejoin="round"/><circle cx="10" cy="10" r="2.6" stroke="#ced0d6" stroke-width="1.4"/></svg>
<div style="position:absolute;left:2540px;top:4px;width:7.4px;height:7.4px;background:#f2c55c;border-radius:50%;"></div>
<div style="position:absolute;left:2px;top:40px;width:30px;height:30px;background:#43454a;border-radius:7px;"></div>
<svg style="position:absolute;left:7px;top:45px;" width="20" height="20" viewBox="0 0 20 20" fill="none"><path d="M1.8 4.6 C1.8 3.6 2.6 2.9 3.5 2.9 H7.2 L9.6 5.3 H16.5 C17.5 5.3 18.2 6.1 18.2 7 V15.3 C18.2 16.3 17.5 17 16.5 17 H3.5 C2.6 17 1.8 16.3 1.8 15.3 Z" stroke="#ced0d6" stroke-width="1.5" stroke-linejoin="round"/></svg>
<svg style="position:absolute;left:6px;top:85px;" width="22" height="20" viewBox="0 0 22 20" fill="none"><circle cx="11" cy="10" r="3.2" stroke="#ced0d6" stroke-width="1.4"/><path d="M1.5 10 H7.5 M14.5 10 H20.5" stroke="#ced0d6" stroke-width="1.4" stroke-linecap="round"/></svg>
<svg style="position:absolute;left:6px;top:124px;" width="24" height="24" viewBox="0 0 24 24" fill="none"><path d="M4 6.5 C6.5 3 13 3 15.5 6.5 M5.5 16.5 C7.5 18.6 10 19 12 18.6" stroke="#ced0d6" stroke-width="1.2" stroke-linecap="round"/><path d="M2.5 10.5 l1.8 2 l2.3 -2.4 l2.3 2.4 l2.3 -2.4 l2.3 2.4 l1.5 -1.6" stroke="#ced0d6" stroke-width="1.2" stroke-linecap="round" stroke-linejoin="round"/><circle cx="15.200" cy="15.500" r="5.300" fill="#ced0d6"/></svg>
<span style="position:absolute;left:18.8px;top:133.8px;line-height:12px;font-size:9.5px;color:#2b2d30;white-space:pre;font-weight:700;">?</span>
<svg style="position:absolute;left:6px;top:165px;" width="22" height="22" viewBox="0 0 22 22" fill="none"><circle cx="5.5" cy="4.8" r="2.3" stroke="#ced0d6" stroke-width="1.3"/><circle cx="5.5" cy="16.2" r="2.3" stroke="#ced0d6" stroke-width="1.3"/><circle cx="16.5" cy="16.2" r="2.3" stroke="#ced0d6" stroke-width="1.3"/><path d="M5.5 7.2 V13.8 M16.5 13.8 V8.5 C16.5 6 15 5 12 5 H11 M13.2 2.2 L10.5 5 L13.2 7.8" stroke="#ced0d6" stroke-width="1.3" stroke-linecap="round" stroke-linejoin="round"/></svg>
<div style="position:absolute;left:5px;top:200px;width:24px;height:1px;background:#43454a;"></div>
<svg style="position:absolute;left:7px;top:216px;" width="20" height="20" viewBox="0 0 20 20" fill="none"><rect x="2.2" y="2.6" width="6.2" height="6.2" rx="1.5" stroke="#ced0d6" stroke-width="1.3"/><rect x="2.2" y="11.4" width="6.2" height="6.2" rx="1.5" stroke="#ced0d6" stroke-width="1.3"/><rect x="11" y="11.4" width="6.2" height="6.2" rx="1.5" stroke="#ced0d6" stroke-width="1.3"/></svg>
<div style="position:absolute;left:8.799999999999999px;top:264.6px;width:2.8px;height:2.8px;background:#ced0d6;border-radius:50%;"></div>
<div style="position:absolute;left:15.6px;top:264.6px;width:2.8px;height:2.8px;background:#ced0d6;border-radius:50%;"></div>
<div style="position:absolute;left:22.400000000000002px;top:264.6px;width:2.8px;height:2.8px;background:#ced0d6;border-radius:50%;"></div>
<div style="position:absolute;left:2px;top:1059px;width:30px;height:30px;background:#43454a;border-radius:7px;"></div>
<svg style="position:absolute;left:5px;top:1062px;" width="24" height="24" viewBox="0 0 24 24" fill="none"><path d="M7.300 7.300 C9.500 4.300 14.500 4.300 16.700 7.300 M7.300 17 C9.500 20 14.500 20 16.700 17" stroke="#ced0d6" stroke-width="1.400" stroke-linecap="round"/><path d="M3.800 11.200 l1.900 2 l2.100 -2.300 l2.100 2.300 l2.100 -2.300 l2.100 2.300 l2.100 -2.300 l2.100 2.300 l1.800 -2" stroke="#ced0d6" stroke-width="1.400" stroke-linecap="round" stroke-linejoin="round"/></svg>
<svg style="position:absolute;left:6px;top:1103px;" width="22" height="22" viewBox="0 0 22 22" fill="none"><path d="M6.5 2.8 H15.5 L20 11 L15.5 19.2 H6.5 L2 11 Z" stroke="#ced0d6" stroke-width="1.4" stroke-linejoin="round"/><path d="M9 7.3 L15 11 L9 14.7 Z" stroke="#ced0d6" stroke-width="1.3" stroke-linejoin="round"/></svg>
<svg style="position:absolute;left:6px;top:1142px;" width="22" height="24" viewBox="0 0 22 24" fill="none"><path d="M2.800 8.300 C4 5 7 3.600 10.500 3.600 H17 C18.500 3.600 19.500 5.500 19.600 8.600 H13 V20.300 H8.800 V8.600 H7.500 C6.500 7.300 4.500 7.300 2.800 8.300 Z" stroke="#ced0d6" stroke-width="1.400" stroke-linejoin="round"/></svg>
<svg style="position:absolute;left:6px;top:1184px;" width="22" height="20" viewBox="0 0 22 20" fill="none"><rect x="2.700" y="2.700" width="16.600" height="14.600" rx="2" stroke="#ced0d6" stroke-width="1.400"/><path d="M6.300 7 L9.300 9.800 L6.300 12.600 M11 13.300 H15.300" stroke="#ced0d6" stroke-width="1.400" stroke-linecap="round" stroke-linejoin="round"/></svg>
<svg style="position:absolute;left:6px;top:1223px;" width="22" height="22" viewBox="0 0 22 22" fill="none"><circle cx="11" cy="11" r="8" stroke="#ced0d6" stroke-width="1.4"/><path d="M11 6.5 V12" stroke="#ced0d6" stroke-width="1.6" stroke-linecap="round"/><circle cx="11" cy="15.2" r="1.1" fill="#ced0d6"/></svg>
<svg style="position:absolute;left:6px;top:1262px;" width="22" height="22" viewBox="0 0 22 22" fill="none"><circle cx="6.600" cy="7.200" r="2.500" stroke="#ced0d6" stroke-width="1.300"/><circle cx="15.400" cy="8.800" r="2.500" stroke="#ced0d6" stroke-width="1.300"/><path d="M6.600 9.800 V20.500 M6.600 16.200 C6.600 13 15.400 15 15.400 11.400" stroke="#ced0d6" stroke-width="1.300" stroke-linecap="round"/></svg>
<svg style="position:absolute;left:2526px;top:44px;" width="22" height="22" viewBox="0 0 22 22" fill="none"><path d="M4 15.5 C5.5 14 5.3 12 5.3 9.5 C5.3 6 7.8 3.5 11 3.5 C14.2 3.5 16.7 6 16.7 9.5 C16.7 12 16.500 14 18 15.5 Z" stroke="#ced0d6" stroke-width="1.4" stroke-linejoin="round"/><path d="M9.3 18 C9.8 19 12.2 19 12.700 18" stroke="#ced0d6" stroke-width="1.4" stroke-linecap="round"/></svg>
<svg style="position:absolute;left:2524.7px;top:83.8px;" width="24.6" height="24.6" viewBox="0 0 22 22" fill="none"><path d="M12.600 9.600 A2 1.900 0 0 0 8.700 10.400 A3.300 2.900 0 0 0 15.300 10.200 A5.700 4.700 0 0 0 3.900 9.800 A6.300 5 0 0 0 10.400 15" stroke="#ced0d6" stroke-width="1.400" stroke-linecap="round"/><path d="M4.300 15.600 C8 18.600 14 18.600 17.900 16.200" stroke="#ced0d6" stroke-width="1.400" stroke-linecap="round"/></svg>
<svg style="position:absolute;left:2526px;top:124px;" width="22" height="22" viewBox="0 0 22 22" fill="none"><ellipse cx="11" cy="5.500" rx="7" ry="3" stroke="#ced0d6" stroke-width="1.4"/><path d="M4 5.500 V16.500 C4 18.200 7 19.500 11 19.500 C15 19.500 18 18.200 18 16.500 V5.500 M4 9.200 C4 10.900 7 12.200 11 12.200 C15 12.200 18 10.900 18 9.200 M4 12.900 C4 14.600 7 15.900 11 15.900 C15 15.900 18 14.600 18 12.900" stroke="#ced0d6" stroke-width="1.4"/></svg>
<span style="position:absolute;left:2527.5px;top:160.5px;line-height:24px;font-size:22px;color:#ced0d6;white-space:pre;font-style:italic;">m</span>
<div style="position:absolute;left:2496px;top:49.1px;width:1.8px;height:1.8px;background:#ced0d6;border-radius:50%;"></div>
<div style="position:absolute;left:2496px;top:54.1px;width:1.8px;height:1.8px;background:#ced0d6;border-radius:50%;"></div>
<div style="position:absolute;left:2496px;top:59.1px;width:1.8px;height:1.8px;background:#ced0d6;border-radius:50%;"></div>
<svg style="position:absolute;left:101.4px;top:52.199999999999996px;" width="9.2" height="7.2" viewBox="0 0 9.2 7.2" fill="none"><path d="M1 1.6 L4.6 5.6 L8.2 1.6" stroke="#9da0a8" stroke-width="1.2" stroke-linecap="round" stroke-linejoin="round"/></svg>
<svg style="position:absolute;left:53.4px;top:88.4px;" width="9.2" height="7.2" viewBox="0 0 9.2 7.2" fill="none"><path d="M1 1.6 L4.6 5.6 L8.2 1.6" stroke="#9da0a8" stroke-width="1.2" stroke-linecap="round" stroke-linejoin="round"/></svg>
<svg style="position:absolute;left:73.6px;top:111.6px;" width="6.8" height="8.8" viewBox="0 0 6.8 8.8" fill="none"><path d="M1.4 1 L5.4 4.4 L1.4 7.8" stroke="#9da0a8" stroke-width="1.2" stroke-linecap="round" stroke-linejoin="round"/></svg>
<svg style="position:absolute;left:73.6px;top:135.6px;" width="6.8" height="8.8" viewBox="0 0 6.8 8.8" fill="none"><path d="M1.4 1 L5.4 4.4 L1.4 7.8" stroke="#9da0a8" stroke-width="1.2" stroke-linecap="round" stroke-linejoin="round"/></svg>
<svg style="position:absolute;left:54.6px;top:207.6px;" width="6.8" height="8.8" viewBox="0 0 6.8 8.8" fill="none"><path d="M1.4 1 L5.4 4.4 L1.4 7.8" stroke="#9da0a8" stroke-width="1.2" stroke-linecap="round" stroke-linejoin="round"/></svg>
<svg style="position:absolute;left:71px;top:84px;" width="16" height="16" viewBox="0 0 16 16" fill="none"><path d="M1.500 3.600 C1.500 2.900 2 2.500 2.600 2.500 H5.800 L7.500 4.300 H13.400 C14 4.300 14.500 4.800 14.500 5.400 V12.400 C14.500 13 14 13.500 13.400 13.500 H2.600 C2 13.500 1.500 13 1.500 12.400 Z" stroke="#ced0d6" stroke-width="1.1" fill="#393b40" stroke-linejoin="round"/></svg>
<div style="position:absolute;left:79.3px;top:92.3px;width:8px;height:8px;background:#2b2d30;"></div>
<div style="position:absolute;left:80.3px;top:93.3px;width:6.3px;height:6.3px;background:#25324d;box-sizing:border-box;border:1.2px solid #548af7;border-radius:1.5px;"></div>
<svg style="position:absolute;left:90px;top:108px;" width="16" height="16" viewBox="0 0 16 16" fill="none"><path d="M1.500 3.600 C1.500 2.900 2 2.500 2.600 2.500 H5.800 L7.500 4.300 H13.400 C14 4.300 14.500 4.800 14.500 5.400 V12.400 C14.500 13 14 13.500 13.400 13.500 H2.600 C2 13.500 1.500 13 1.500 12.400 Z" stroke="#ced0d6" stroke-width="1.1" fill="#393b40" stroke-linejoin="round"/></svg>
<svg style="position:absolute;left:90px;top:132px;" width="16" height="16" viewBox="0 0 16 16" fill="none"><path d="M1.500 3.600 C1.500 2.900 2 2.500 2.600 2.500 H5.800 L7.500 4.300 H13.400 C14 4.300 14.500 4.800 14.500 5.400 V12.400 C14.500 13 14 13.500 13.400 13.500 H2.600 C2 13.500 1.500 13 1.500 12.400 Z" stroke="#ced0d6" stroke-width="1.1" fill="#393b40" stroke-linejoin="round"/></svg>
<span style="position:absolute;left:90.0px;top:153.0px;line-height:20px;font-size:19px;color:#548af7;white-space:pre;font-style:italic;">m</span>
<span style="position:absolute;left:89.7px;top:181.6px;line-height:12px;font-size:11.5px;color:#548af7;white-space:pre;font-weight:700;-webkit-text-stroke:0.300px;">M</span>
<svg style="position:absolute;left:99.5px;top:183.5px;" width="7" height="10" viewBox="0 0 7 10" fill="none"><path d="M3.500 1.500 V8 M1 5.500 L3.500 8.200 L6 5.500" stroke="#548af7" stroke-width="1.400" stroke-linecap="round" stroke-linejoin="round"/></svg>
<svg style="position:absolute;left:71px;top:204px;" width="16" height="16" viewBox="0 0 16 16" fill="none"><path d="M2 13.500 V6.500 H5.500 V13.500 M5.500 13.500 V2.500 H9.500 V13.500 M9.500 13.500 V6.500 H13.500 V13.500 Z M2 13.500 H13.500" stroke="#ced0d6" stroke-width="1.100" stroke-linejoin="round"/></svg>
<svg style="position:absolute;left:71px;top:227px;" width="18" height="18" viewBox="0 0 18 18" fill="none"><path d="M1.500 6.500 H8.500 M1.500 9.500 H11.500 M1.500 12.500 H11.500 M1.500 15.500 H8.500" stroke="#ced0d6" stroke-width="1.100" stroke-linecap="round"/><circle cx="12.800" cy="5" r="3.600" fill="#548af7"/><path d="M12.800 3.200 V5.200 L14 6" stroke="#2b2d30" stroke-width="1"/></svg>
<span style="position:absolute;left:511.7px;top:48.6px;line-height:12px;font-size:11.5px;color:#548af7;white-space:pre;font-weight:700;-webkit-text-stroke:0.300px;">M</span>
<svg style="position:absolute;left:521.5px;top:50.5px;" width="7" height="10" viewBox="0 0 7 10" fill="none"><path d="M3.500 1.500 V8 M1 5.500 L3.500 8.200 L6 5.500" stroke="#548af7" stroke-width="1.400" stroke-linecap="round" stroke-linejoin="round"/></svg>
<svg style="position:absolute;left:652px;top:47px;" width="16" height="16" viewBox="0 0 16 16" fill="none"><circle cx="8" cy="8" r="6.7" stroke="#548af7" stroke-width="1.100" fill="#25324d"/></svg>
<span style="position:absolute;left:656.3px;top:49.1px;line-height:12px;font-size:10.5px;color:#548af7;white-space:pre;">C</span>
<svg style="position:absolute;left:803px;top:50px;" width="10" height="10" viewBox="0 0 10 10" fill="none"><path d="M1.500 1.500 L8.500 8.500 M8.500 1.500 L1.500 8.500" stroke="#868a91" stroke-width="1.100" stroke-linecap="round"/></svg>
<svg style="position:absolute;left:512px;top:87px;" width="16" height="15" viewBox="0 0 16 15" fill="none"><path d="M8 1.300 L15 13.500 H1 Z" fill="#f2c55c" stroke="#f2c55c" stroke-width="1.400" stroke-linejoin="round"/><path d="M8 5.300 V9.300" stroke="#3d3223" stroke-width="1.800" stroke-linecap="round"/><circle cx="8" cy="11.700" r="1" fill="#3d3223"/></svg>
<svg style="position:absolute;left:2336px;top:120px;" width="16" height="16" viewBox="0 0 16 16" fill="none"><path d="M3.500 4.500 C5.500 2 10.500 2 12.500 4.500 M3.500 11.500 C5.500 14 10.500 14 12.500 11.500" stroke="#3d9a50" stroke-width="1.100" stroke-linecap="round"/><path d="M2 7.500 l1.500 1.500 l1.500 -1.600 l1.500 1.600 l1.500 -1.600 l1.500 1.600 l1.500 -1.600 l1.500 1.600 l1.500 -1.500" stroke="#3d9a50" stroke-width="1.100" stroke-linecap="round" stroke-linejoin="round"/></svg>
<div style="position:absolute;left:2361px;top:119px;width:1px;height:19px;background:#393b40;"></div>
<svg style="position:absolute;left:2373px;top:121.5px;" width="13" height="13" viewBox="0 0 13 13" fill="none"><circle cx="6.500" cy="6.500" r="6" fill="#db3b4b"/><path d="M6.500 3 V7.300" stroke="#fff" stroke-width="1.700" stroke-linecap="round"/><circle cx="6.500" cy="9.900" r="1" fill="#fff"/></svg>
<svg style="position:absolute;left:2410.5px;top:121px;" width="13" height="13" viewBox="0 0 13 13" fill="none"><path d="M6.500 1.300 L12.200 11.500 H0.800 Z" fill="#d6ae58" stroke="#d6ae58" stroke-width="1.300" stroke-linejoin="round"/><path d="M6.500 4.300 V7.800" stroke="#1e1f22" stroke-width="1.500" stroke-linecap="round"/><circle cx="6.500" cy="9.900" r="0.900" fill="#1e1f22"/></svg>
<svg style="position:absolute;left:2445.5px;top:121px;" width="13" height="13" viewBox="0 0 13 13" fill="none"><path d="M6.500 1.300 L12.200 11.500 H0.800 Z" fill="#a08b5a" stroke="#a08b5a" stroke-width="1.300" stroke-linejoin="round"/><path d="M6.500 4.300 V7.800" stroke="#1e1f22" stroke-width="1.500" stroke-linecap="round"/><circle cx="6.500" cy="9.900" r="0.900" fill="#1e1f22"/></svg>
<svg style="position:absolute;left:2478.4px;top:123.9px;" width="9.2" height="7.2" viewBox="0 0 9.2 7.2" fill="none"><path d="M1 5.6 L4.6 1.6 L8.2 5.6" stroke="#ced0d6" stroke-width="1.2" stroke-linecap="round" stroke-linejoin="round"/></svg>
<svg style="position:absolute;left:2500.4px;top:124.4px;" width="9.2" height="7.2" viewBox="0 0 9.2 7.2" fill="none"><path d="M1 1.6 L4.6 5.6 L8.2 1.6" stroke="#ced0d6" stroke-width="1.2" stroke-linecap="round" stroke-linejoin="round"/></svg>
<div style="position:absolute;left:2502px;top:154px;width:14px;height:2px;background:#d64d5b;"></div>
<div style="position:absolute;left:2502px;top:308px;width:14px;height:2px;background:#d64d5b;"></div>
<div style="position:absolute;left:2502px;top:328px;width:14px;height:2px;background:#d64d5b;"></div>
<div style="position:absolute;left:2502px;top:347px;width:14px;height:2px;background:#d64d5b;"></div>
<div style="position:absolute;left:2502px;top:418px;width:14px;height:2px;background:#d64d5b;"></div>
<div style="position:absolute;left:2502px;top:456px;width:14px;height:2px;background:#d64d5b;"></div>
<div style="position:absolute;left:2502px;top:508px;width:14px;height:2px;background:#d64d5b;"></div>
<div style="position:absolute;left:2502px;top:520px;width:14px;height:2px;background:#d64d5b;"></div>
<div style="position:absolute;left:2502px;top:527px;width:14px;height:2px;background:#d64d5b;"></div>
<div style="position:absolute;left:2502px;top:597px;width:14px;height:2px;background:#d64d5b;"></div>
<div style="position:absolute;left:2502px;top:604px;width:14px;height:2px;background:#d64d5b;"></div>
<div style="position:absolute;left:2502px;top:617px;width:14px;height:2px;background:#d64d5b;"></div>
<div style="position:absolute;left:2502px;top:655px;width:14px;height:2px;background:#d64d5b;"></div>
<div style="position:absolute;left:2502px;top:668px;width:14px;height:2px;background:#d64d5b;"></div>
<div style="position:absolute;left:2502px;top:675px;width:14px;height:2px;background:#d64d5b;"></div>
<div style="position:absolute;left:2502px;top:687px;width:14px;height:2px;background:#d64d5b;"></div>
<div style="position:absolute;left:2502px;top:694px;width:14px;height:2px;background:#d64d5b;"></div>
<div style="position:absolute;left:2502px;top:700px;width:14px;height:2px;background:#d64d5b;"></div>
<div style="position:absolute;left:2502px;top:707px;width:14px;height:2px;background:#d64d5b;"></div>
<div style="position:absolute;left:2502px;top:726px;width:14px;height:2px;background:#d64d5b;"></div>
<div style="position:absolute;left:2502px;top:752px;width:14px;height:2px;background:#d64d5b;"></div>
<div style="position:absolute;left:2502px;top:777px;width:14px;height:2px;background:#d64d5b;"></div>
<div style="position:absolute;left:2502px;top:784px;width:14px;height:2px;background:#d64d5b;"></div>
<div style="position:absolute;left:2502px;top:790px;width:14px;height:2px;background:#d64d5b;"></div>
<div style="position:absolute;left:2502px;top:186px;width:14px;height:2px;background:#c99d3c;"></div>
<div style="position:absolute;left:2502px;top:206px;width:14px;height:2px;background:#c99d3c;"></div>
<div style="position:absolute;left:2502px;top:225px;width:14px;height:2px;background:#c99d3c;"></div>
<div style="position:absolute;left:2506.5px;top:435px;width:6.5px;height:242px;background:rgba(128,130,136,0.45);border-radius:3.500px;"></div>
<svg style="position:absolute;left:543px;top:377px;" width="18" height="18" viewBox="0 0 18 18" fill="none"><circle cx="7.500" cy="7.500" r="6" stroke="#4e9f5d" stroke-width="1.100" fill="#27382b"/><path d="M3.300 3.300 L8 8.500" stroke="#4e9f5d" stroke-width="1.100"/><circle cx="11.500" cy="11.500" r="4.200" fill="#ced0d6"/><path d="M7.500 11.500 H15.500 M11.500 7.500 V15.500 M9 8.500 C10 10.500 10 12.500 9 14.500 M14 8.500 C13 10.500 13 12.500 14 14.500" stroke="#43454a" stroke-width="0.600"/></svg>
<span style="position:absolute;left:545.5px;top:882.5px;line-height:16px;font-size:14px;color:#ced0d6;white-space:pre;">@</span>
<svg style="position:absolute;left:702px;top:356px;" width="19" height="14" viewBox="0 0 19 14" fill="none"><rect x="0" y="0" width="19" height="14" rx="2" fill="#25272b"/><circle cx="6" cy="7" r="4.600" stroke="#868a91" stroke-width="0.900"/><path d="M1.400 7 H10.600 M6 2.400 V11.600 M6 2.400 C3.500 4.500 3.500 9.500 6 11.600 M6 2.400 C8.500 4.500 8.500 9.500 6 11.600" stroke="#868a91" stroke-width="0.700"/><path d="M12.800 6 L14.800 8 L16.800 6" stroke="#868a91" stroke-width="1" stroke-linecap="round" stroke-linejoin="round"/></svg>
<svg style="position:absolute;left:851px;top:358.5px;" width="10" height="10" viewBox="0 0 10 10" fill="none"><circle cx="5" cy="2.800" r="2" fill="#868a91"/><path d="M1 9 C1 6 3 5.500 5 5.500 C7 5.500 9 6 9 9 Z" fill="#868a91"/></svg>
<svg style="position:absolute;left:1090px;top:886.5px;" width="10" height="10" viewBox="0 0 10 10" fill="none"><circle cx="5" cy="2.800" r="2" fill="#868a91"/><path d="M1 9 C1 6 3 5.500 5 5.500 C7 5.500 9 6 9 9 Z" fill="#868a91"/></svg>
<div style="position:absolute;left:46px;top:1013px;width:22px;height:22px;background:#43454a;border-radius:5px;"></div>
<svg style="position:absolute;left:48px;top:1015px;" width="18" height="18" viewBox="0 0 18 18" fill="none"><circle cx="8.500" cy="9.500" r="6.300" stroke="#ced0d6" stroke-width="1.200"/><circle cx="8.500" cy="9.500" r="2" stroke="#ced0d6" stroke-width="1.200"/><path d="M10 8 L14 4 M12.300 2.500 L12.800 5.200 L15.500 5.700" stroke="#ced0d6" stroke-width="1.200" stroke-linecap="round"/></svg>
<svg style="position:absolute;left:50.5px;top:1042px;" width="14" height="17" viewBox="0 0 14 17" fill="none"><path d="M1.500 1.500 L12.500 8.500 L1.500 15.500 Z" fill="#3fae4b"/></svg>
<div style="position:absolute;left:51px;top:1070px;width:12px;height:12px;background:#595a5c;"></div>
<svg style="position:absolute;left:48px;top:1093px;" width="18" height="18" viewBox="0 0 18 18" fill="none"><circle cx="8.900" cy="8.700" r="1" fill="#e8e9ec"/><path d="M8.76 6.10 A2.6 2.6 0 0 1 11.50 8.84 M8.66 4.11 A4.6 4.6 0 0 1 13.49 8.94 M8.55 2.11 A6.6 6.6 0 0 1 15.49 9.05 M9.04 11.30 A2.6 2.6 0 0 1 6.30 8.56 M9.14 13.29 A4.6 4.6 0 0 1 4.31 8.46 M9.25 15.29 A6.6 6.6 0 0 1 2.31 8.35" stroke="#e8e9ec" stroke-width="1.050" stroke-linecap="round"/><rect x="9.500" y="10.500" width="8.500" height="7" fill="#2b2d30"/><path d="M10.800 13.800 L12.800 15.700 L16.600 12.200" stroke="#3fae4b" stroke-width="1.500" stroke-linecap="round" stroke-linejoin="round"/></svg>
<svg style="position:absolute;left:48px;top:1119px;" width="18" height="18" viewBox="0 0 18 18" fill="none"><path d="M2.300 6.900 L7.700 2.400 L9.900 4.800 L4.100 9.900 Z" fill="#3592c4"/><path d="M5.300 14.500 L12.300 7.700" stroke="#a0a3a8" stroke-width="2.300" stroke-linecap="round"/><path d="M15.300 4 L13.300 6 L14.300 7.400 L16.500 6 C16.800 7.800 15.300 9.300 13.300 9 C11.500 8.600 10.800 6.500 11.800 5 C12.600 3.800 14 3.500 15.300 4 Z" fill="#a0a3a8"/><path d="M9.600 10.200 L15.200 15" stroke="#a0a3a8" stroke-width="2" stroke-linecap="round"/></svg>
<svg style="position:absolute;left:50px;top:1146.5px;" width="14" height="14" viewBox="0 0 14 14" fill="none"><circle cx="7" cy="7" r="5.200" fill="#6b6c6f"/><path d="M4.800 4.800 L9.200 9.200 M9.200 4.800 L4.800 9.200" stroke="#2b2d30" stroke-width="1.100" stroke-linecap="round"/></svg>
<svg style="position:absolute;left:93.6px;top:1050.1px;" width="6.8" height="8.8" viewBox="0 0 6.8 8.8" fill="none"><path d="M1.4 1 L5.4 4.4 L1.4 7.8" stroke="#9da0a8" stroke-width="1.2" stroke-linecap="round" stroke-linejoin="round"/></svg>
<svg style="position:absolute;left:993px;top:1275px;" width="16" height="16" viewBox="0 0 16 16" fill="none"><circle cx="8" cy="7.800" r="6.600" stroke="#6f737a" stroke-width="1"/></svg>
<span style="position:absolute;left:998.7px;top:1277.0px;line-height:12px;font-size:9px;color:#868a91;white-space:pre;">?</span>
<svg style="position:absolute;left:1279px;top:1275px;" width="18" height="17" viewBox="0 0 18 17" fill="none"><path d="M4.500 11.500 C2 11.500 1 9.800 1 8.300 C1 6.500 2.500 5.200 4.200 5.400 C4.800 3 6.800 1.800 9 1.800 C11.500 1.800 13.300 3.500 13.600 5.800 C15 6 16 7.200 16 8.600 C16 10 15 11.500 13 11.500 Z" fill="#b4b6bb"/><circle cx="13.500" cy="12.500" r="3.800" fill="#2b2d30"/><circle cx="13.500" cy="12.500" r="2" stroke="#ced0d6" stroke-width="1.200"/><path d="M13.500 9.300 V10.300 M13.500 14.700 V15.700 M10.300 12.500 H11.300 M15.700 12.500 H16.700 M11.300 10.300 L12 11 M15 14 L15.700 14.700 M11.300 14.700 L12 14 M15 11 L15.700 10.300" stroke="#ced0d6" stroke-width="1"/></svg>
<svg style="position:absolute;left:1560px;top:1128.1px;" width="13" height="13" viewBox="0 0 13 13" fill="none"><path d="M4.400 2.700 Q5.200 6.200 8.700 7 Q5.200 7.800 4.400 11.300 Q3.600 7.800 0.100 7 Q3.600 6.200 4.400 2.700 Z" stroke="#dfe1e5" stroke-width="1.300" stroke-linejoin="round"/><path d="M9.700 1.700 Q10.100 3.600 12 4 Q10.100 4.400 9.700 6.300 Q9.300 4.400 7.400 4 Q9.300 3.600 9.700 1.700 Z" fill="#dfe1e5"/><circle cx="6.100" cy="1" r="0.500" fill="#dfe1e5"/></svg>
<svg style="position:absolute;left:1417px;top:1244.1px;" width="13" height="13" viewBox="0 0 13 13" fill="none"><path d="M4.400 2.700 Q5.200 6.200 8.700 7 Q5.200 7.800 4.400 11.300 Q3.600 7.800 0.100 7 Q3.600 6.200 4.400 2.700 Z" stroke="#ffffff" stroke-width="1.300" stroke-linejoin="round"/><path d="M9.700 1.700 Q10.100 3.600 12 4 Q10.100 4.400 9.700 6.300 Q9.300 4.400 7.400 4 Q9.300 3.600 9.700 1.700 Z" fill="#ffffff"/><circle cx="6.100" cy="1" r="0.500" fill="#ffffff"/></svg>
<svg style="position:absolute;left:1627.5px;top:1085px;" width="14" height="14" viewBox="0 0 14 14" fill="none"><circle cx="7" cy="7" r="6.600" fill="#e8392c"/><path d="M3.800 9.300 C3.800 5.800 5 4.200 7 4.200 C9 4.200 10.200 5.800 10.200 9.300 Z" fill="#4d2a2b"/></svg>
<svg style="position:absolute;left:1300px;top:1170px;" width="120" height="105" viewBox="0 0 120 105" fill="none"><defs><linearGradient id="lg1" x1="24" y1="0" x2="65" y2="0" gradientUnits="userSpaceOnUse"><stop offset="0" stop-color="#d62fa6"/><stop offset="1" stop-color="#8a5fe2"/></linearGradient><linearGradient id="lg2" x1="33" y1="0" x2="52" y2="0" gradientUnits="userSpaceOnUse"><stop offset="0" stop-color="#cc3bb8"/><stop offset="1" stop-color="#9563de"/></linearGradient></defs>
<circle cx="65.1" cy="35.3" r="13.1" stroke="#5f6dd6" stroke-width="3.8"/>
<path d="M76.5 47.6 C81.5 48.6 84 52.5 84 57.5 V74.4 H71.6 V83 H64" stroke="#5f6dd6" stroke-width="3.6" stroke-linejoin="miter"/>
<path d="M55 47.6 C50.6 48.4 47.6 51.5 47.2 56" stroke="#5f6dd6" stroke-width="3.6"/>
<path d="M49.8 55.5 C50.4 52.6 52.8 50.6 56.5 50.3 L62 51" stroke="#d9dcff" stroke-width="2.4"/>
<path d="M25.3 57 H61.6 L63.8 82.8 H27.7 Z" stroke="url(#lg1)" stroke-width="3.8" stroke-linejoin="round"/>
<path d="M29.6 59 L31.4 78" stroke="#dfe1ff" stroke-width="4.4"/>
<path d="M42.1 48.6 Q45.4 55.9 52 59.5 Q45.4 63.100 42.1 70.400 Q38.800 63.100 32.200 59.5 Q38.800 55.900 42.100 48.600 Z" fill="url(#lg2)" stroke="#2b2d30" stroke-width="1.2"/>
<path d="M42.1 56.9 L44.5 59.5 L42.1 62.1 L39.7 59.5 Z" fill="#2b2d30"/></svg>
<div style="position:absolute;left:1155px;top:1247.8px;width:217.5px;height:4px;background:#ff2a00;"></div>
<svg style="position:absolute;left:1370px;top:1239px;" width="22" height="22" viewBox="0 0 22 22" fill="none"><path d="M1.400 2 L19.300 10.800 L1.400 19.100 Z" fill="#ff2a00"/></svg>
<div style="position:absolute;left:1535px;top:1114.3px;width:138.8px;height:55px;background:transparent;box-sizing:border-box;border:4px solid #ff2a00;"></div>
<div style="position:absolute;left:11.5px;top:1304px;width:7.5px;height:7.5px;background:transparent;box-sizing:border-box;border:1.300px solid #548af7;border-radius:1.500px;"></div>
<svg style="position:absolute;left:149.3px;top:1303.8px;" width="6.4" height="8.4" viewBox="0 0 6.4 8.4" fill="none"><path d="M1.2000000000000002 1 L5.2 4.2 L1.2000000000000002 7.4" stroke="#868a91" stroke-width="1.1" stroke-linecap="round" stroke-linejoin="round"/></svg>
<svg style="position:absolute;left:192.60000000000002px;top:1303.8px;" width="6.4" height="8.4" viewBox="0 0 6.4 8.4" fill="none"><path d="M1.2000000000000002 1 L5.2 4.2 L1.2000000000000002 7.4" stroke="#868a91" stroke-width="1.1" stroke-linecap="round" stroke-linejoin="round"/></svg>
<svg style="position:absolute;left:245.20000000000002px;top:1303.8px;" width="6.4" height="8.4" viewBox="0 0 6.4 8.4" fill="none"><path d="M1.2000000000000002 1 L5.2 4.2 L1.2000000000000002 7.4" stroke="#868a91" stroke-width="1.1" stroke-linecap="round" stroke-linejoin="round"/></svg>
<svg style="position:absolute;left:293.8px;top:1303.8px;" width="6.4" height="8.4" viewBox="0 0 6.4 8.4" fill="none"><path d="M1.2000000000000002 1 L5.2 4.2 L1.2000000000000002 7.4" stroke="#868a91" stroke-width="1.1" stroke-linecap="round" stroke-linejoin="round"/></svg>
<svg style="position:absolute;left:343.40000000000003px;top:1303.8px;" width="6.4" height="8.4" viewBox="0 0 6.4 8.4" fill="none"><path d="M1.2000000000000002 1 L5.2 4.2 L1.2000000000000002 7.4" stroke="#868a91" stroke-width="1.1" stroke-linecap="round" stroke-linejoin="round"/></svg>
<svg style="position:absolute;left:487.6px;top:1303.8px;" width="6.4" height="8.4" viewBox="0 0 6.4 8.4" fill="none"><path d="M1.2000000000000002 1 L5.2 4.2 L1.2000000000000002 7.4" stroke="#868a91" stroke-width="1.1" stroke-linecap="round" stroke-linejoin="round"/></svg>
<svg style="position:absolute;left:571.5px;top:1303.8px;" width="6.4" height="8.4" viewBox="0 0 6.4 8.4" fill="none"><path d="M1.2000000000000002 1 L5.2 4.2 L1.2000000000000002 7.4" stroke="#868a91" stroke-width="1.1" stroke-linecap="round" stroke-linejoin="round"/></svg>
<svg style="position:absolute;left:586.8px;top:1299.6px;" width="16" height="16" viewBox="0 0 16 16" fill="none"><circle cx="8" cy="8" r="6.7" stroke="#548af7" stroke-width="1.100" fill="#25324d"/></svg>
<span style="position:absolute;left:591.1px;top:1301.7px;line-height:12px;font-size:10.5px;color:#548af7;white-space:pre;">C</span>
<svg style="position:absolute;left:2525px;top:1300px;" width="16" height="16" viewBox="0 0 16 16" fill="none"><rect x="2" y="7" width="9.500" height="7" rx="1.500" stroke="#ced0d6" stroke-width="1.300"/><path d="M8.500 7 V4.800 C8.500 2.200 13.500 2.200 13.500 4.800 V5.500" stroke="#ced0d6" stroke-width="1.300" stroke-linecap="round"/><circle cx="6.800" cy="10.500" r="1" fill="#ced0d6"/></svg>
</div></body></html>
